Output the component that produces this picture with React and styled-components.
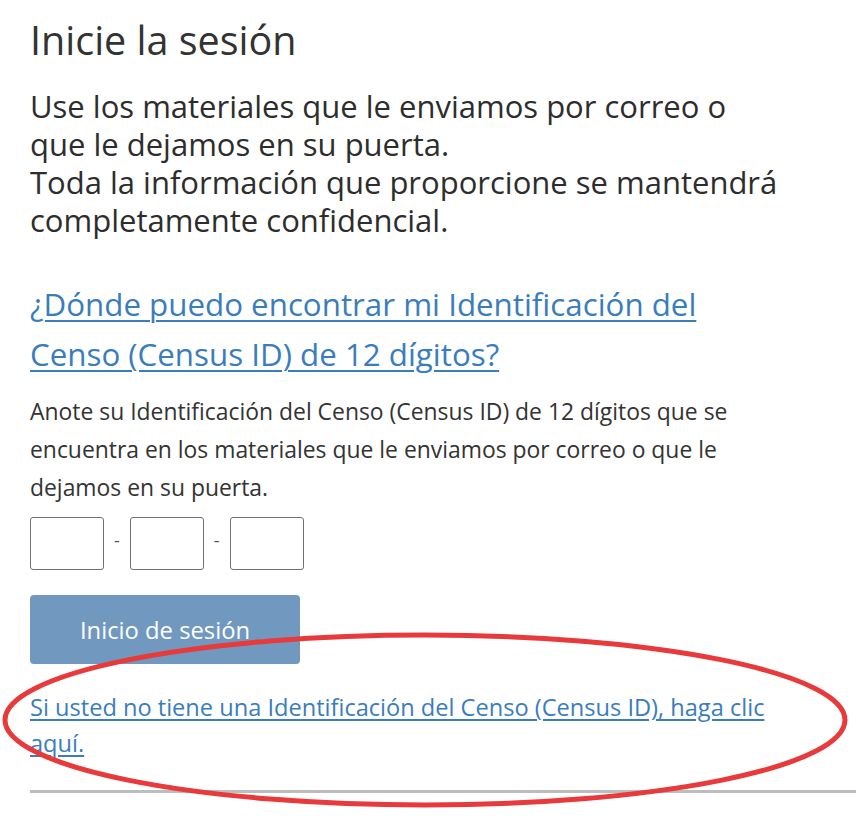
import styled, { createGlobalStyle } from 'styled-components';

const GlobalStyle = createGlobalStyle`
  html, body {
    margin: 0;
    padding: 0;
    background: #ffffff;
  }
  body {
    font-family: "Open Sans", Lato, sans-serif;
    color: #333;
  }
`;

const Page = styled.div`
  position: relative;
  width: 856px;
  height: 816px;
  overflow: hidden;
  padding: 17px 0 0 30px;
  box-sizing: border-box;
`;

const Title = styled.h1`
  margin: 0;
  font-size: 39.5px;
  font-weight: 400;
  line-height: 46px;
  color: #333;
`;

const Intro = styled.p`
  margin: 24px 0 0;
  font-size: 31px;
  line-height: 38px;
  color: #2d2d2d;
`;

const HelpLink = styled.a`
  display: block;
  margin-top: 40px;
  font-size: 31.3px;
  line-height: 50px;
  color: #3a7dbd;
  text-decoration: underline;
  text-underline-offset: 4px;
  text-decoration-thickness: 2px;
`;

const Hint = styled.p`
  margin: 14px 0 0;
  width: 745px;
  font-size: 22.9px;
  line-height: 38px;
  color: #333;
`;

const IdRow = styled.div`
  display: flex;
  align-items: center;
  gap: 10px;
  margin-top: 10px;
`;

const IdBox = styled.input`
  width: 74px;
  height: 53px;
  box-sizing: border-box;
  border: 1.5px solid #707070;
  border-radius: 3px;
  background: #fff;
  padding: 0;
`;

const Dash = styled.span`
  font-size: 18px;
  line-height: 1;
  color: #555;
  margin-top: -8px;
`;

const SubmitButton = styled.button`
  display: block;
  margin-top: 25px;
  width: 270px;
  height: 69px;
  border: none;
  border-radius: 4px;
  background: #7199bf;
  color: #fff;
  font-family: inherit;
  font-size: 23.8px;
  padding: 0;
`;

const NoIdLink = styled.a`
  display: block;
  margin-top: 25px;
  width: 760px;
  font-size: 23.6px;
  line-height: 36px;
  color: #3a7dbd;
  text-decoration: underline;
  text-underline-offset: 3px;
`;

const Divider = styled.hr`
  margin: 29px 0 0;
  border: none;
  height: 3px;
  background: #bdbdbd;
`;

const Annotation = styled.svg`
  position: absolute;
  left: 0;
  top: 0;
  pointer-events: none;
`;

export default function App() {
  return (
    <>
      <GlobalStyle />
      <Page>
        <Title>Inicie la sesión</Title>
        <Intro>
          Use los materiales que le enviamos por correo o
          <br />
          que le dejamos en su puerta.
          <br />
          Toda la información que proporcione se mantendrá
          <br />
          completamente confidencial.
        </Intro>
        <HelpLink href="#">
          ¿Dónde puedo encontrar mi Identificación del
          <br />
          Censo (Census ID) de 12 dígitos?
        </HelpLink>
        <Hint>
          Anote su Identificación del Censo (Census ID) de 12 dígitos que se
          encuentra en los materiales que le enviamos por correo o que le
          dejamos en su puerta.
        </Hint>
        <IdRow>
          <IdBox aria-label="Dígitos 1-4" />
          <Dash>-</Dash>
          <IdBox aria-label="Dígitos 5-8" />
          <Dash>-</Dash>
          <IdBox aria-label="Dígitos 9-12" />
        </IdRow>
        <SubmitButton>Inicio de sesión</SubmitButton>
        <NoIdLink href="#">
          Si usted no tiene una Identificación del Censo (Census ID), haga clic
          aquí.
        </NoIdLink>
        <Divider />
        <Annotation width="856" height="816" viewBox="0 0 856 816">
          <ellipse
            cx="425"
            cy="720"
            rx="420"
            ry="85"
            fill="none"
            stroke="#e8393b"
            strokeWidth="5"
          />
        </Annotation>
      </Page>
    </>
  );
}
